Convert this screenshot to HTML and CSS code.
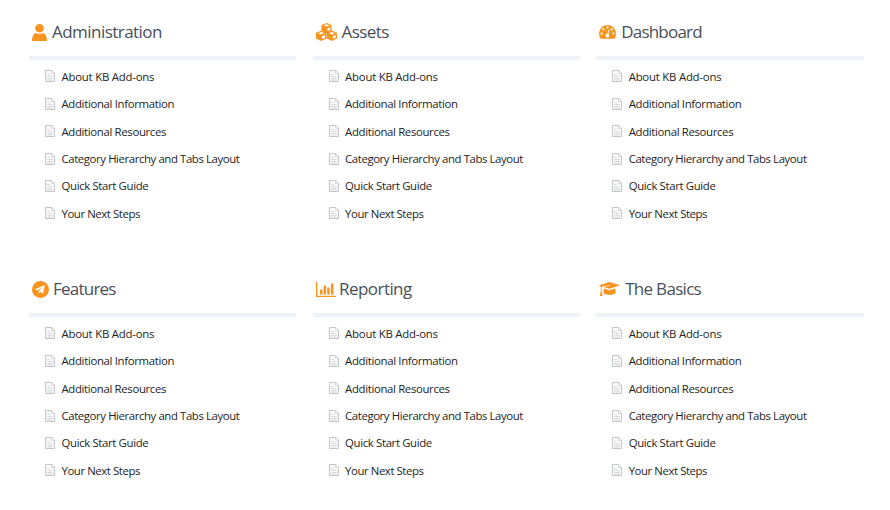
FILE: index.html
```html
<!DOCTYPE html>
<html lang="en">
<head>
<meta charset="utf-8">
<title>Knowledge Base</title>
<link rel="stylesheet" href="styles.css">
</head>
<body>
<svg class="sprite" aria-hidden="true">
  <symbol id="doc" viewBox="0 0 10 12"><path d="M.5.5h6.3l2.7 2.7v8.3h-9z" fill="#fafafa" stroke="#c3c6c8"/><path d="M6.5.7v2.8h2.8M2.2 4.5h2.6M2.2 6.5h5.6M2.2 8.5h5.6M2.2 10h5.6" fill="none" stroke="#cfd2d4" stroke-width=".8"/></symbol>
</svg>
<main class="categories">
  <section class="category">
    <h2><svg class="icon user" viewBox="0 0 15 17"><circle cx="7.5" cy="4.3" r="4.3"/><path d="M3.8 9.1Q7.5 11 11.2 9.1C13.6 10.2 15 12.9 15 16.2 15 16.7 14.7 17 14.2 17H.8C.3 17 0 16.7 0 16.2 0 12.9 1.4 10.2 3.8 9.1z"/></svg><span class="w-admin">Administration</span></h2>
    <ul>
      <li><svg><use href="#doc"/></svg><a class="about">About KB Add-ons</a></li>
      <li><svg><use href="#doc"/></svg><a class="info">Additional Information</a></li>
      <li><svg><use href="#doc"/></svg><a class="resources">Additional Resources</a></li>
      <li><svg><use href="#doc"/></svg><a class="hierarchy">Category Hierarchy and Tabs Layout</a></li>
      <li><svg><use href="#doc"/></svg><a class="guide">Quick Start Guide</a></li>
      <li><svg><use href="#doc"/></svg><a class="steps">Your Next Steps</a></li>
    </ul>
  </section>
  <section class="category">
    <h2><svg class="icon cubes" viewBox="0 0 21 18"><path d="M10.5 0l5 2v5.9l-5 2.3-5-2.3V2z"/><path d="M5.1 7.7l5.2 2.1v5.7l-5.2 2.4L0 15.5V9.8zM15.9 7.7L21 9.8v5.7l-5.1 2.4-5.2-2.4V9.8z"/><path class="cut" d="M7.4 2.4l3.1-1.2 3.1 1.2-3.1 1.2zM11.4 5.4l2.8-1.2v2.7l-2.8 1.3zM2 10.2L5.1 9l3.1 1.2-3.1 1.2zM6 13.1l2.9-1.2v2.8L6 16zM12.8 10.2L15.9 9l3.1 1.2-3.1 1.2zM16.8 13.1l2.9-1.2v2.8L16.8 16z"/></svg><span class="w-assets">Assets</span></h2>
    <ul>
      <li><svg><use href="#doc"/></svg><a class="about">About KB Add-ons</a></li>
      <li><svg><use href="#doc"/></svg><a class="info">Additional Information</a></li>
      <li><svg><use href="#doc"/></svg><a class="resources">Additional Resources</a></li>
      <li><svg><use href="#doc"/></svg><a class="hierarchy">Category Hierarchy and Tabs Layout</a></li>
      <li><svg><use href="#doc"/></svg><a class="guide">Quick Start Guide</a></li>
      <li><svg><use href="#doc"/></svg><a class="steps">Your Next Steps</a></li>
    </ul>
  </section>
  <section class="category">
    <h2><svg class="icon dash" viewBox="0 0 17 14"><path d="M8.5 0A8.5 8.5 0 0 1 17 8.5c0 1.8-.5 3.4-1.3 4.8-.2.4-.5.5-.9.5H2.2c-.4 0-.7-.1-.9-.5A9 9 0 0 1 0 8.5 8.5 8.5 0 0 1 8.5 0z"/><g class="cut"><circle cx="2.6" cy="8.6" r="1.15"/><circle cx="4.3" cy="4.3" r="1.15"/><circle cx="8.5" cy="2.5" r="1.15"/><circle cx="12.7" cy="4.3" r="1.15"/><circle cx="14.4" cy="8.6" r="1.15"/><path d="M9.4 4.7l1 .3-1 4.1a1.9 1.9 0 1 1-1-.3z"/></g></svg><span class="w-dash">Dashboard</span></h2>
    <ul>
      <li><svg><use href="#doc"/></svg><a class="about">About KB Add-ons</a></li>
      <li><svg><use href="#doc"/></svg><a class="info">Additional Information</a></li>
      <li><svg><use href="#doc"/></svg><a class="resources">Additional Resources</a></li>
      <li><svg><use href="#doc"/></svg><a class="hierarchy">Category Hierarchy and Tabs Layout</a></li>
      <li><svg><use href="#doc"/></svg><a class="guide">Quick Start Guide</a></li>
      <li><svg><use href="#doc"/></svg><a class="steps">Your Next Steps</a></li>
    </ul>
  </section>
  <section class="category">
    <h2><svg class="icon plane" viewBox="0 0 17 17"><circle cx="8.5" cy="8.5" r="8.5"/><path class="cut" d="M12.8 4.1L3 8.2l2.5 1.2 5.3-3.5-4 4.1v2.8l1.6-1.7 2.8 1.3z"/></svg><span class="w-features">Features</span></h2>
    <ul>
      <li><svg><use href="#doc"/></svg><a class="about">About KB Add-ons</a></li>
      <li><svg><use href="#doc"/></svg><a class="info">Additional Information</a></li>
      <li><svg><use href="#doc"/></svg><a class="resources">Additional Resources</a></li>
      <li><svg><use href="#doc"/></svg><a class="hierarchy">Category Hierarchy and Tabs Layout</a></li>
      <li><svg><use href="#doc"/></svg><a class="guide">Quick Start Guide</a></li>
      <li><svg><use href="#doc"/></svg><a class="steps">Your Next Steps</a></li>
    </ul>
  </section>
  <section class="category">
    <h2><svg class="icon chart" viewBox="0 0 20 15"><path d="M0 0h1.3v13.7H20V15H0zM4 7.5h2.5v5H4zM7.6 3.5h2.5v9H7.6zM11.2 5.5h2.5v7h-2.5zM14.9 1.5h2.5v11h-2.5z"/></svg><span class="w-reporting">Reporting</span></h2>
    <ul>
      <li><svg><use href="#doc"/></svg><a class="about">About KB Add-ons</a></li>
      <li><svg><use href="#doc"/></svg><a class="info">Additional Information</a></li>
      <li><svg><use href="#doc"/></svg><a class="resources">Additional Resources</a></li>
      <li><svg><use href="#doc"/></svg><a class="hierarchy">Category Hierarchy and Tabs Layout</a></li>
      <li><svg><use href="#doc"/></svg><a class="guide">Quick Start Guide</a></li>
      <li><svg><use href="#doc"/></svg><a class="steps">Your Next Steps</a></li>
    </ul>
  </section>
  <section class="category">
    <h2><svg class="icon cap" viewBox="0 0 21 15"><path d="M10.5 0L21 3.3 10.5 6.8 4.6 4.9l6-1.1-.1-.6-7.3 1.4-.5.8-.1 3 .9 5.5H1l.8-5.5.1-3.5L0 3.3zM4.8 6.4l5.7 1.8 5.7-1.8.4 4.3c-1 2.7-11.2 2.7-12.2 0z"/></svg><span class="w-basics">The Basics</span></h2>
    <ul>
      <li><svg><use href="#doc"/></svg><a class="about">About KB Add-ons</a></li>
      <li><svg><use href="#doc"/></svg><a class="info">Additional Information</a></li>
      <li><svg><use href="#doc"/></svg><a class="resources">Additional Resources</a></li>
      <li><svg><use href="#doc"/></svg><a class="hierarchy">Category Hierarchy and Tabs Layout</a></li>
      <li><svg><use href="#doc"/></svg><a class="guide">Quick Start Guide</a></li>
      <li><svg><use href="#doc"/></svg><a class="steps">Your Next Steps</a></li>
    </ul>
  </section>
</main>
</body>
</html>
```
FILE: styles.css
```css
* { box-sizing: border-box; }
body { margin: 0; background: #fff; font-family: "Open Sans", "Noto Sans", sans-serif; }
.sprite { display: none; }
.categories {
  display: grid;
  grid-template-columns: repeat(3, 267.4px);
  grid-auto-rows: 257px;
  column-gap: 16.2px;
  padding: 16px 0 0 29px;
}
h2 {
  display: flex;
  align-items: center;
  height: 44px;
  margin: 0;
  padding: 0 0 8px 3px;
  border-bottom: 4px solid #edf2f6;
  color: #4a5057;
  font-size: 17px;
  font-weight: 400;
  line-height: 24px;
  white-space: nowrap;
}
.icon { flex: none; fill: #f7941e; }
.cut { fill: #fff; }
.user { width: 15px; height: 17px; margin-right: 5px; }
.cubes { width: 21px; height: 18px; margin-right: 5px; }
.dash { width: 17px; height: 14px; margin-right: 5px; }
.plane { width: 17px; height: 17px; margin-right: 4px; }
.chart { width: 20px; height: 15px; margin-right: 3.5px; }
.cap { width: 21px; height: 15px; margin-right: 5px; }
.w-admin { letter-spacing: -.54px; }
.w-assets { letter-spacing: -.57px; }
.w-dash { letter-spacing: -.78px; }
.w-features { letter-spacing: -.77px; }
.w-reporting { letter-spacing: -.56px; }
.w-basics { letter-spacing: -.7px; }
ul { list-style: none; margin: 0; padding: 2.8px 0 0 16px; }
li {
  display: flex;
  align-items: center;
  height: 27.35px;
  color: #1e1e1e;
  font-size: 11.4px;
  white-space: nowrap;
}
li svg { flex: none; width: 10px; height: 12px; margin-right: 6.5px; }
.about { letter-spacing: -.23px; }
.info { letter-spacing: -.34px; }
.resources { letter-spacing: -.35px; }
.hierarchy { letter-spacing: -.41px; }
.guide { letter-spacing: -.36px; }
.steps { letter-spacing: -.43px; }
```
